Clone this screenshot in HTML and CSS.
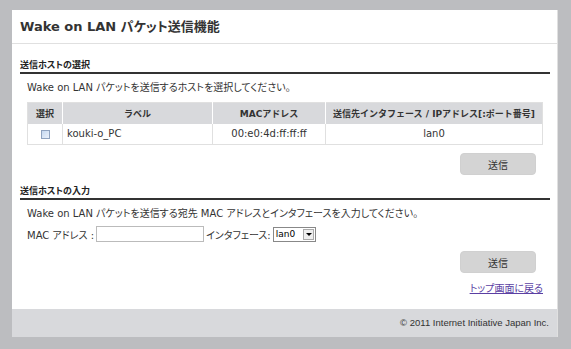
FILE: index.html
```html
<!DOCTYPE html>
<html lang="ja">

<head>
    <meta charset="UTF-8">
    <title>Wake on LAN パケット送信機能</title>
    <link rel="stylesheet" href="styles.css">
</head>

<body>
    <div class="wrap">
        <div class="head">
            <h1>Wake on LAN パケット送信機能</h1>
        </div>

        <div class="main">
            <h2>送信ホストの選択</h2>
            <p class="desc">Wake on LAN パケットを送信するホストを選択してください。</p>
            <table class="hosts">
                <tr>
                    <th class="c1">選択</th>
                    <th class="c2">ラベル</th>
                    <th class="c3">MACアドレス</th>
                    <th class="c4">送信先インタフェース / IPアドレス[:ポート番号]</th>
                </tr>
                <tr>
                    <td class="c1"><span class="chk"></span></td>
                    <td class="c2 left">kouki-o_PC</td>
                    <td class="c3">00:e0:4d:ff:ff:ff</td>
                    <td class="c4">lan0</td>
                </tr>
            </table>
            <div class="btns"><button>送信</button></div>

            <h2>送信ホストの入力</h2>
            <p class="desc">Wake on LAN パケットを送信する宛先 MAC アドレスとインタフェースを入力してください。</p>
            <div class="form">
                <label>MAC アドレス :</label>
                <input type="text" class="mac">
                <label>インタフェース:</label>
                <span class="sel">lan0<span class="arr"></span></span>
            </div>
            <div class="btns two"><button>送信</button></div>
            <div class="back"><a href="">トップ画面に戻る</a></div>
        </div>

        <div class="foot">© 2011 Internet Initiative Japan Inc.</div>
    </div>
</body>

</html>
```

FILE: styles.css
```css
* {
    margin: 0;
    padding: 0;
    box-sizing: border-box;
}

body {
    background: #bcbdc0;
    padding: 10px 13px 13px 12px;
    font-family: "DejaVu Sans", "Noto Sans CJK JP", sans-serif;
    /* 카나 폭을 메이리오처럼 좁게 */
    font-feature-settings: "palt";
    font-size: 10px;
    color: #333;
}

.wrap {
    background: #fff;
    border-right: 1px solid #e0e0e0;
}

.head {
    height: 34px;
    border-bottom: 1px solid #e0e0e0;
    padding: 6px 8px 0;
}

.head h1 {
    font-size: 13px;
    font-weight: bold;
    color: #333;
}

.main {
    padding: 14px 7px 14px 8px;
}

h2 {
    font-size: 9px;
    font-weight: bold;
    color: #222;
    border-bottom: 2px solid #333;
    padding-bottom: 1px;
}

.desc {
    margin: 7px 0 0 7px;
    line-height: 14px;
}

.hosts {
    margin: 7px 0 0 7px;
    width: 516px;
    border-collapse: collapse;
    border: 1px solid #e0e0e0;
}

.hosts th {
    background: #d8d9dc;
    height: 21px;
    font-size: 9px;
    font-weight: bold;
    font-feature-settings: normal;
    border-left: 1px solid #fff;
}

.hosts td {
    height: 21px;
    text-align: center;
    border-left: 1px solid #e0e0e0;
}

.hosts .c1 {
    width: 35px;
    border-left: none;
}

.hosts .c2 {
    width: 150px;
}

.hosts .c3 {
    width: 113px;
}

.hosts td.left {
    text-align: left;
    padding-left: 4px;
}

.chk {
    display: inline-block;
    width: 9px;
    height: 9px;
    border: 1px solid #8fa3c0;
    background: linear-gradient(135deg, #c6d9f1, #eaf1fb);
    vertical-align: middle;
}

.btns {
    display: flex;
    justify-content: flex-end;
    padding: 8px 14px 0 0;
    height: 39px;
}

.btns.two {
    height: 30px;
    padding-top: 9px;
}

.btns button {
    width: 76px;
    height: 22px;
    border: 1px solid #d0d0d0;
    border-radius: 4px;
    background: #d4d4d4;
    font-family: inherit;
    font-size: 10px;
    color: #333;
}

.form {
    display: flex;
    align-items: center;
    gap: 2px;
    margin: 5px 0 0 7px;
    height: 16px;
}

.mac {
    width: 108px;
    height: 16px;
    border: 1px solid #bbb;
}

.sel {
    display: flex;
    align-items: center;
    justify-content: space-between;
    width: 43px;
    height: 15px;
    border: 1px solid #888;
    padding-left: 2px;
    font-size: 9px;
    color: #000;
}

.arr {
    width: 11px;
    height: 11px;
    margin-right: 1px;
    border: 1px solid #aaa;
    background: #eee;
    position: relative;
}

.arr::after {
    content: "";
    position: absolute;
    left: 2px;
    top: 3px;
    border: 3px solid transparent;
    border-top: 3px solid #000;
}

.back {
    text-align: right;
    padding: 8px 7px 0 0;
}

.back a {
    color: #5b3fa3;
}

.foot {
    background: #d8d9dc;
    height: 28px;
    line-height: 28px;
    text-align: right;
    padding-right: 8px;
    font-family: "Liberation Sans", sans-serif;
    font-size: 9.5px;
}
```
